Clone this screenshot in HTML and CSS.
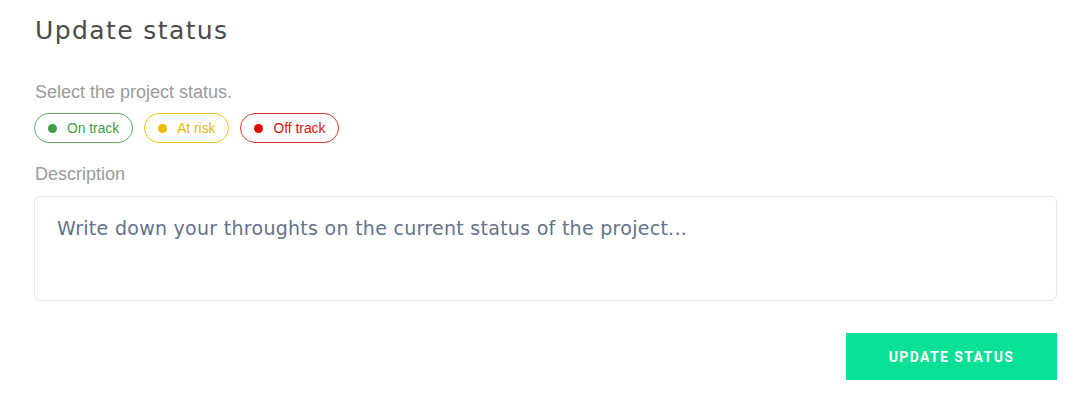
FILE: index.html
```html
<!DOCTYPE html>
<html>
<head>
<meta charset="utf-8">
<link rel="stylesheet" href="styles.css">
</head>
<body>
<div class="panel">
  <h1 class="title">Update status</h1>
  <p class="label label-status">Select the project status.</p>
  <div class="pills">
    <span class="pill pill-green"><span class="dot"></span>On track</span>
    <span class="pill pill-yellow"><span class="dot"></span>At risk</span>
    <span class="pill pill-red"><span class="dot"></span>Off track</span>
  </div>
  <p class="label label-desc">Description</p>
  <div class="textarea">Write down your throughts on the current status of the project...</div>
  <div class="actions">
    <button class="btn">UPDATE STATUS</button>
  </div>
</div>
</body>
</html>
```
FILE: styles.css
```css
html, body {
  margin: 0;
  padding: 0;
  background: #ffffff;
}
.panel {
  padding: 14px 18px 0 34px;
  display: flex;
  flex-direction: column;
}
.title {
  margin: 0;
  font-family: "DejaVu Sans", "Liberation Sans", sans-serif;
  font-weight: 400;
  font-size: 25px;
  letter-spacing: 1.4px;
  line-height: 34px;
  color: #4b4b4b;
  padding-left: 1px;
}
.label {
  margin: 0;
  font-family: "Liberation Sans", Arial, sans-serif;
  font-size: 18px;
  color: #9b9b9b;
  padding-left: 1px;
}
.label-status {
  margin-top: 34px;
  line-height: 20px;
}
.pills {
  display: flex;
  gap: 11px;
  margin-top: 11px;
}
.pill {
  display: inline-flex;
  align-items: center;
  height: 30px;
  box-sizing: border-box;
  padding: 0 13px 0 13px;
  border: 1px solid;
  border-radius: 15px;
  font-family: "Liberation Sans", Arial, sans-serif;
  font-size: 13.8px;
}
.dot {
  width: 9px;
  height: 9px;
  border-radius: 50%;
  margin-right: 10px;
  background: currentColor;
}
.pill-green { color: #3d9c46; border-color: #5aad5f; }
.pill-green .dot { background: #3e9b47; }
.pill-yellow { color: #e6b800; border-color: #f0c419; }
.pill-yellow .dot { background: #ecbb00; }
.pill-red { color: #dd1111; border-color: #e23a3a; }
.pill-red .dot { background: #e00000; }
.label-desc {
  margin-top: 21px;
  line-height: 20px;
}
.textarea {
  margin-top: 12px;
  height: 105px;
  box-sizing: border-box;
  border: 1px solid #e3e6ee;
  border-radius: 6px;
  padding: 18px 22px;
  font-family: "DejaVu Sans", "Liberation Sans", sans-serif;
  font-size: 19px;
  letter-spacing: 0.28px;
  line-height: 26px;
  color: #62738b;
}
.actions {
  display: flex;
  justify-content: flex-end;
  margin-top: 32px;
}
.btn {
  width: 211px;
  height: 47px;
  border: none;
  border-radius: 0;
  background: #08e096;
  color: #ffffff;
  font-family: "Roboto", "Liberation Sans", sans-serif;
  font-weight: 700;
  font-size: 14px;
  letter-spacing: 1.4px;
}
```
